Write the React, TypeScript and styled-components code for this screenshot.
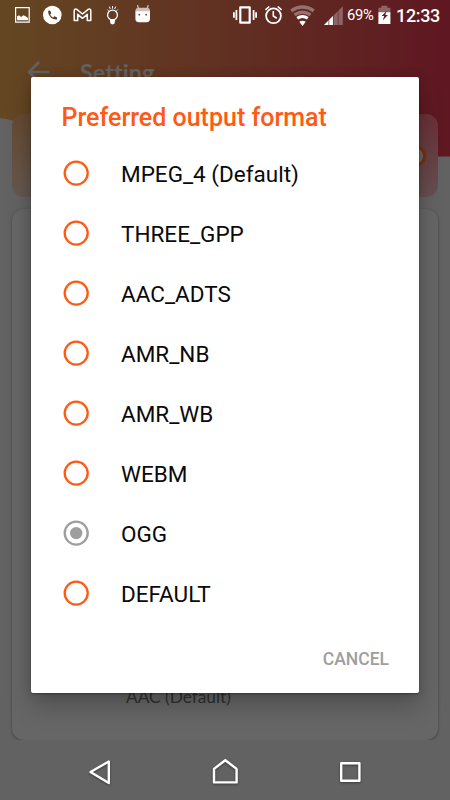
import React from "react";
import styled, { createGlobalStyle } from "styled-components";

const Global = createGlobalStyle`
  * { box-sizing: border-box; }
  body { margin: 0; background: #626262; }
`;

const Screen = styled.div`
  position: relative;
  width: 450px;
  height: 800px;
  overflow: hidden;
  display: flex;
  flex-direction: column;
  background: #626262;
  font-family: Roboto, sans-serif;
`;

const HeaderCurve = styled.svg`
  position: absolute;
  top: 0;
  left: 0;
`;

const StatusBar = styled.header`
  position: relative;
  flex: none;
  height: 31px;
  display: flex;
  justify-content: space-between;
  color: #fff;
`;

const StatusIcons = styled.svg`
  display: block;
`;

const StatusRight = styled.div`
  display: flex;
`;

const Battery = styled.span`
  width: 28px;
  font-size: 14.8px;
  line-height: 31px;
  letter-spacing: -0.3px;
  white-space: nowrap;
`;

const Clock = styled.span`
  width: 54px;
  font-size: 18px;
  font-weight: 500;
  line-height: 31px;
  letter-spacing: -0.35px;
`;

const AppBar = styled.div`
  position: relative;
  flex: none;
  height: 83px;
  padding: 29px 0 0 27px;
  display: flex;
  align-items: flex-start;
  gap: 30px;
  color: #626262;
`;

const AppTitle = styled.h1`
  margin: -2px 0 0;
  font: 700 23.5px/28px Lato, sans-serif;
  font-variant-ligatures: none;
`;

const ToggleCard = styled.div`
  position: relative;
  flex: none;
  height: 83px;
  margin: 0 12px;
  padding-right: 12px;
  border-radius: 12px;
  display: flex;
  align-items: center;
  justify-content: flex-end;
  background:
    linear-gradient(rgba(100, 96, 96, 0.22), rgba(100, 96, 96, 0.72)),
    linear-gradient(90deg, #664324, #6a222b);
`;

const Knob = styled.span`
  width: 22px;
  height: 22px;
  border: 3px solid #7a300c;
  border-radius: 50%;
  background: #666;
`;

const SettingsCard = styled.div`
  position: relative;
  flex: none;
  height: 531px;
  margin: 12px 12px 0;
  border-radius: 12px;
  background: #666;
  box-shadow: 0 1px 3px rgba(0, 0, 0, 0.35);
  display: flex;
  align-items: flex-end;
  padding: 0 0 31px 114px;
`;

const SettingValue = styled.span`
  font: 400 17.3px/24px Lato, sans-serif;
  color: #303030;
`;

const NavBar = styled.nav`
  position: relative;
  flex: 1;
  background: #626262;
`;

const Dialog = styled.section`
  position: absolute;
  left: 31px;
  top: 77px;
  width: 388px;
  height: 616px;
  border-radius: 2px;
  background: #fff;
  box-shadow: 0 13px 24px rgba(0, 0, 0, 0.22), 0 0 12px rgba(0, 0, 0, 0.12), 0 1px 2px rgba(0, 0, 0, 0.3);
  padding: 24px 30px 0;
  display: flex;
  flex-direction: column;
`;

const DialogTitle = styled.h2`
  margin: 0;
  height: 45px;
  padding-left: 0.5px;
  font-size: 25px;
  line-height: 34px;
  font-weight: 500;
  color: #ff5a14;
  white-space: nowrap;
`;

const Options = styled.ul`
  list-style: none;
  margin: 0;
  padding: 0;
`;

const Option = styled.li`
  height: 60px;
  padding: 0 0 6px 2px;
  display: flex;
  align-items: center;
  gap: 32px;
  font-size: 22.5px;
  color: #0a0a0a;
`;

const RadioIcon = styled.svg<{ $on: boolean }>`
  display: block;
  color: ${(p) => (p.$on ? "#9e9e9e" : "#ff5a14")};
`;

const Label = styled.span`
  padding-top: 1px;
`;

const Cancel = styled.button`
  align-self: flex-end;
  margin-top: 21px;
  padding: 0;
  border: 0;
  background: none;
  font: 500 17.5px/24px Roboto, sans-serif;
  color: #9e9e9e;
`;

const NavIcons = styled.svg`
  position: absolute;
  left: 0;
  bottom: 0;
  filter: drop-shadow(0 1px 1px rgba(0, 0, 0, 0.4));
`;

const formats = ["MPEG_4 (Default)", "THREE_GPP", "AAC_ADTS", "AMR_NB", "AMR_WB", "WEBM", "OGG", "DEFAULT"];

function Radio({ on }: { on: boolean }) {
  return (
    <RadioIcon $on={on} width="26" height="26">
      <circle cx="13.2" cy="13.1" r="11.5" fill="none" stroke="currentColor" strokeWidth="2.3" />
      {on && <circle cx="13.2" cy="13.1" r="6.2" fill="currentColor" />}
    </RadioIcon>
  );
}

export default function App() {
  return (
    <Screen>
      <Global />
      <HeaderCurve width="450" height="160">
        <defs>
          <linearGradient id="head" x1="0" x2="1" y1="0" y2="0">
            <stop offset="0" stopColor="#644722" />
            <stop offset=".5" stopColor="#613022" />
            <stop offset="1" stopColor="#5f1721" />
          </linearGradient>
        </defs>
        <path d="M0 0H450V156.5C410 157 360 154 290 140C190 128 60 125 12 120.5Q5 118.5 0 118Z" fill="url(#head)" />
      </HeaderCurve>

      <StatusBar>
        <StatusIcons width="160" height="31" fill="none" stroke="#fff">
          <path d="M15.6 7.7h13.6v14.4H15.6z" strokeWidth="1.2" />
          <path d="M17 20.3v-3.8l2-1.2 2.2 1.7 2-1.7 2 .6 2.8 2v2.4z" fill="#fff" stroke="none" />
          <circle cx="52.3" cy="15" r="9.3" fill="#fff" stroke="none" />
          <path d="M48.2 10.8l1.9-.4 1.2 2.8-1.2 1.2c.7 1.5 1.6 2.4 3.1 3.1l1.2-1.2 2.8 1.2-.4 2c-4.9.4-9-3.8-8.6-8.7z" fill="#5f3b23" stroke="none" />
          <path d="M74.2 20.4V10.6c0-1.5 1.4-2 2.6-1.2l5.7 4.6 5.7-4.6c1.2-.8 2.6-.3 2.6 1.2v9.8h-3.5v-6.1l-4.8 4-4.8-4v6.1z" strokeWidth="1.5" strokeLinejoin="round" />
          <circle cx="112.5" cy="15" r="4.9" strokeWidth="1.3" />
          <path d="M110.5 19.5h4v1.7h-4z" fill="#fff" strokeWidth="1" />
          <circle cx="112.5" cy="22" r="2.4" fill="#fff" stroke="none" />
          <path d="M112.5 6v2.6M110.3 9l-1-2.4M114.7 9l1-2.4M107.3 9.6l1.2 1.2M117.7 9.6l-1.2 1.2" strokeWidth="1" />
          <path d="M135.4 11H150v7.8q0 3.4-3.4 3.4H138.800q-3.400 0-3.400-3.400z" fill="#fff" stroke="none" />
          <path d="M135.4 11.200c0-3 2-3.400 4-3.400h6.600c2 0 4 .4 4 3.400z" fill="#d0bfb9" stroke="none" />
          <path d="M138.4 8.500l-.9-3.300M147.300 8.500l.9-3.300" stroke="#d0bfb9" strokeWidth="1.300" />
          <circle cx="139.300" cy="14.700" r=".9" fill="#69433b" stroke="none" />
          <circle cx="146.200" cy="14.700" r=".9" fill="#69433b" stroke="none" />
        </StatusIcons>
        <StatusRight>
          <StatusIcons width="115" height="31" viewBox="232 0 115 31" fill="none" stroke="#fff">
            <path d="M240.3 7.3h9.4v15.4h-9.4z" strokeWidth="2.2" strokeLinejoin="round" />
            <path d="M233.900 12.200v5.600M236.400 10v10M253.600 10v10M256.100 12.200v5.600" strokeWidth="1.800" />
            <circle cx="273.5" cy="15.800" r="7.400" strokeWidth="1.800" />
            <path d="M273.3 11v5l3.500 2.200M265.400 9.800l3.900-3.300M281.600 9.800l-3.900-3.300" strokeWidth="1.600" />
            <g stroke="#94716c" strokeWidth="3.300">
              <path d="M291.200 10.800q11.300-7.600 22.600 0M294.500 14.900q8-5.400 16 0" />
            </g>
            <path d="M297.200 18.300q5.300-3.600 10.600 0" strokeWidth="3" />
            <path d="M299.300 21.700q3.200-2 6.400 0l-3.200 4.300z" fill="#fff" stroke="none" />
            <path d="M324 25L342.800 6.200V25z" fill="#8d6465" stroke="none" />
            <path d="M324 25L333 16V25z" fill="#fff" stroke="none" />
            <path d="M328.800 18v7M333.400 13v12M338.200 9v16" stroke="#6b2d29" strokeWidth=".7" />
          </StatusIcons>
          <Battery>69%</Battery>
          <StatusIcons width="21" height="31" viewBox="375 0 21 31">
            <path d="M378.400 7.700h3V5.800h6v1.900h3v4.700h-12z" fill="#8d6465" />
            <path d="M378.400 12.200h12V24h-12z" fill="#fff" />
            <path d="M386.700 10.700l-5 5.300h2.500l-1.500 4.400 5.200-5.500h-2.600z" fill="#641e25" />
          </StatusIcons>
          <Clock>12:33</Clock>
        </StatusRight>
      </StatusBar>

      <AppBar>
        <svg width="23" height="24" fill="none" stroke="#626262" strokeWidth="2.6">
          <path d="M12 2L2 12l10 10M2 12h20.5" />
        </svg>
        <AppTitle>Setting</AppTitle>
      </AppBar>
      <ToggleCard><Knob /></ToggleCard>
      <SettingsCard><SettingValue>AAC (Default)</SettingValue></SettingsCard>
      <NavBar />

      <Dialog role="dialog">
        <DialogTitle>Preferred output format</DialogTitle>
        <Options>
          {formats.map((name) => (
            <Option key={name}>
              <Radio on={name === "OGG"} />
              <Label>{name}</Label>
            </Option>
          ))}
        </Options>
        <Cancel>CANCEL</Cancel>
      </Dialog>
      <NavIcons width="450" height="60" viewBox="0 740 450 60" fill="none" stroke="#fff" strokeWidth="2.4" strokeLinejoin="round">
        <path d="M90.500 772l18.300-10.500v21.500z" />
        <path d="M214 782.400v-13.500l11.300-8.700 11.300 8.700v13.500z" />
        <path d="M341.200 763.200h18.200v17.600h-18.200z" />
      </NavIcons>
    </Screen>
  );
}
